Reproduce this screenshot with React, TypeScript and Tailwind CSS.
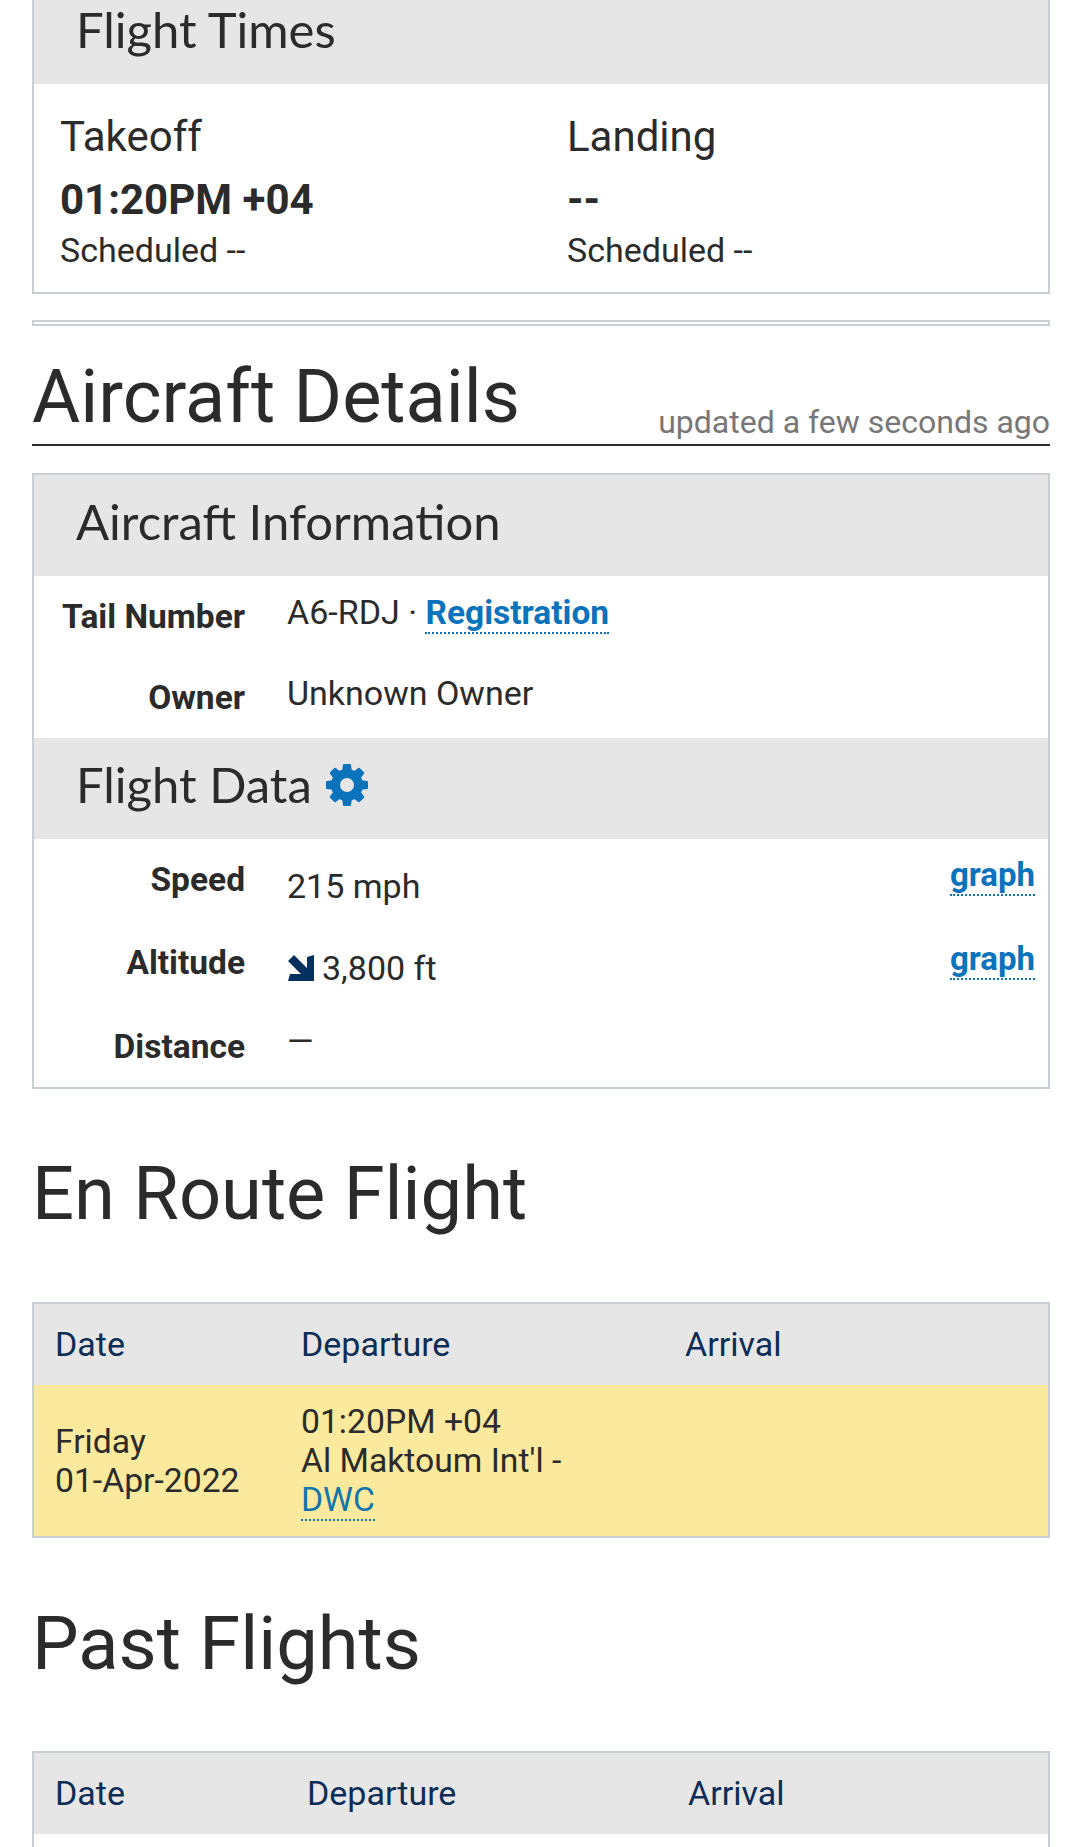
const sectionHead = "bg-[#e6e6e6] font-['Lato'] text-[#2b2b2b]";
const link = 'text-[#0b72bc] border-b-2 border-dotted border-[#0b72bc]';
const heading = 'mt-[60px] mb-[63px] text-[74px] leading-[90px]';

function TimeCol({ label, time, width }: { label: string; time: string; width: string }) {
  return (
    <div className={width}>
      <div className="text-[42px] leading-[52px]">{label}</div>
      <div className="mt-[11px] text-[42px] leading-[52px] font-bold">{time}</div>
      <div className="text-[34px] leading-[48px]">Scheduled --</div>
    </div>
  );
}

function DataRow({ label, children, graph, h, labelTop, valueTop }: {
  label: string;
  children: React.ReactNode;
  graph?: boolean;
  h: string;
  labelTop: string;
  valueTop: string;
}) {
  return (
    <div className={`flex ${h}`}>
      <div className={`w-[211px] shrink-0 text-right text-[33.5px] font-bold leading-[40px] ${labelTop}`}>{label}</div>
      <div className={`flex-1 pl-[42px] text-[34px] leading-[40px] ${valueTop}`}>{children}</div>
      {graph && (
        <div className="pr-[13px] pt-[16px] text-[33px] font-bold leading-[40px]">
          <a className={link}>graph</a>
        </div>
      )}
    </div>
  );
}

function TableHead({ date, dep }: { date: string; dep: string }) {
  return (
    <div className="flex h-[81px] items-center bg-[#e6e6e6] pl-[21px] text-[34px] text-[#0d2d57]">
      <div className={date}>Date</div>
      <div className={dep}>Departure</div>
      <div>Arrival</div>
    </div>
  );
}

function Cog() {
  return (
    <svg width="42" height="42" viewBox="0 0 42 42" className="shrink-0">
      <circle cx="21" cy="21" r="11.5" fill="none" stroke="#0b72bc" strokeWidth="9" />
      {[0, 45, 90, 135, 180, 225, 270, 315].map((deg) => (
        <path key={deg} d="M16 8 L17 1 Q17 0 18 0 H24 Q25 0 25 1 L26 8 Z" fill="#0b72bc" transform={`rotate(${deg} 21 21)`} />
      ))}
    </svg>
  );
}

export default function App() {
  return (
    <div className="h-[1847px] overflow-hidden bg-white pl-8 pr-[30px] font-['Roboto',sans-serif] text-[#2b2b2b]">
      {/* Flight times */}
      <div className="border-2 border-t-0 border-[#c9d0d4]">
        <div className={`${sectionHead} h-[84px] pl-[42px] text-[49px] leading-[58px]`}>Flight Times</div>
        <div className="flex h-[208px] pl-[26px] pt-[27px]">
          <TimeCol label="Takeoff" time="01:20PM +04" width="w-[507px]" />
          <TimeCol label="Landing" time="--" width="w-[400px]" />
        </div>
      </div>
      <div className="mt-[26px] h-[6px] border-2 border-[#c9d0d4]"></div>

      {/* Aircraft details */}
      <div className="flex h-[120px] items-end justify-between border-b-2 border-[#2b2b2b]">
        <h1 className="pb-[2px] text-[74px] leading-[90px]">Aircraft Details</h1>
        <div className="text-[32px] leading-[43px] text-[#777]">updated a few seconds ago</div>
      </div>

      <div className="mt-[27px] h-[616px] border-2 border-[#c9d0d4]">
        <div className={`${sectionHead} h-[101px] pl-[42px] text-[49px] leading-[92px]`}>Aircraft Information</div>
        <DataRow label="Tail Number" h="h-[81px]" labelTop="pt-[21px]" valueTop="pt-[16px]">
          A6-RDJ · <a className={`${link} text-[33.5px] font-bold`}>Registration</a>
        </DataRow>
        <DataRow label="Owner" h="h-[81px]" labelTop="pt-[21px]" valueTop="pt-[16px]">Unknown Owner</DataRow>
        <div className={`${sectionHead} flex h-[101px] items-center gap-[14px] pb-[7px] pl-[42px] text-[49px]`}>
          Flight Data <Cog />
        </div>
        <DataRow label="Speed" graph h="h-[84px]" labelTop="pt-[21px]" valueTop="pt-[27px]">215 mph</DataRow>
        <DataRow label="Altitude" graph h="h-[84px]" labelTop="pt-[20px]" valueTop="pt-[25px]">
          <span className="inline-flex items-center gap-[8px]">
            <svg width="26" height="26" viewBox="0 0 26 26" className="ml-[1px]">
              <path d="M6 0 L19 13 V2 L26 0 V26 H0 L2 19 H13 L0 6 Z" fill="#03305f" />
            </svg>
            3,800 ft
          </span>
        </DataRow>
        <DataRow label="Distance" h="h-[80px]" labelTop="pt-[20px]" valueTop="pt-[14px]">—</DataRow>
      </div>

      <h1 className={heading}>En Route Flight</h1>

      <div className="border-2 border-[#c9d0d4]">
        <TableHead date="w-[246px]" dep="w-[384px]" />
        <div className="flex h-[151px] items-center bg-[#fbe99d] pl-[21px] text-[33.7px] leading-[39px]">
          <div className="w-[246px]">Friday<br />01-Apr-2022</div>
          <div>01:20PM +04<br />Al Maktoum Int'l -<br /><a className="border-b-2 border-dotted border-[#1276ad] text-[#1276ad]">DWC</a></div>
        </div>
      </div>

      <h1 className="mt-[61px] mb-[62px] text-[74px] leading-[90px]">Past Flights</h1>

      <div className="h-[110px] border-2 border-[#c9d0d4]">
        <TableHead date="w-[252px]" dep="w-[381px]" />
      </div>
    </div>
  );
}
